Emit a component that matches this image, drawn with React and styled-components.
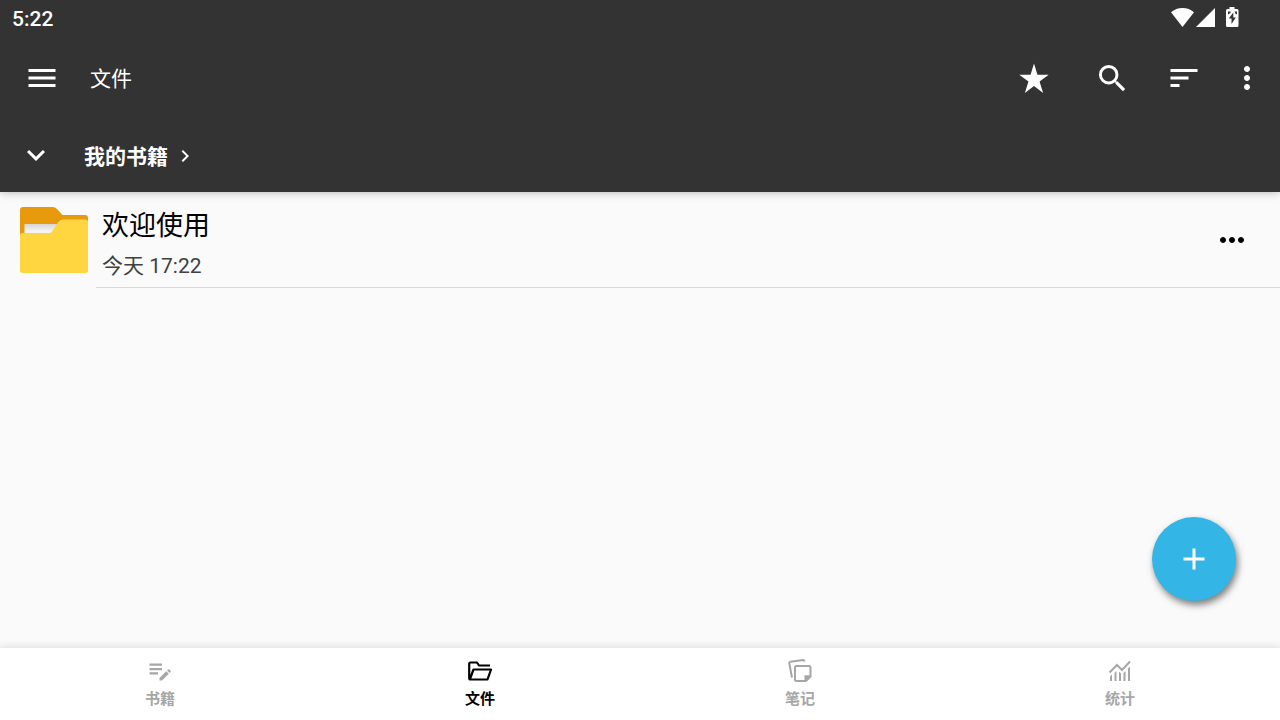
import React, { useState } from "react";
import styled, { createGlobalStyle } from "styled-components";

const GlobalStyle = createGlobalStyle`
  * {
    box-sizing: border-box;
  }
  body {
    margin: 0;
    background: #fafafa;
    font-family: Roboto, "Noto Sans CJK SC", sans-serif;
  }
  button {
    border: none;
    padding: 0;
    background: none;
    color: inherit;
    font: inherit;
    cursor: pointer;
  }
  svg {
    display: block;
    fill: currentColor;
  }
`;

const Layout = styled.div`
  display: flex;
  flex-direction: column;
  min-height: 100vh;
`;

const Header = styled.header`
  background: #333333;
  color: #ffffff;
  box-shadow: 0 1px 8px rgba(0, 0, 0, 0.25);
`;

const StatusBar = styled.div`
  display: flex;
  align-items: flex-start;
  height: 36px;
  padding: 0 41px 0 12px;
`;

const Clock = styled.span`
  flex: 1;
  font-size: 21px;
  font-weight: 500;
  line-height: 38px;
`;

const StatusIcons = styled.div`
  padding-top: 7px;
`;

const Toolbar = styled.div`
  display: flex;
  align-items: center;
  height: 84px;
  padding: 0 6px;
`;

const IconButton = styled.button`
  display: flex;
  align-items: center;
  justify-content: center;
  width: ${(props) => props.$width || 72}px;
  height: 72px;
`;

const Title = styled.h1`
  flex: 1;
  margin: 0;
  padding: 2px 0 0 12px;
  font-size: 21px;
  font-weight: 400;
  line-height: 32px;
`;

const PathBar = styled.nav`
  display: flex;
  align-items: center;
  height: 72px;
`;

const PathLink = styled.a`
  display: flex;
  align-items: center;
  gap: 5px;
  padding-left: 12px;
  color: #ffffff;
  font-size: 21px;
  font-weight: 700;
  line-height: 32px;
  text-decoration: none;
`;

const PathName = styled.span`
  padding-top: 2px;
`;

const FileList = styled.ul`
  flex: 1;
  margin: 0;
  padding: 0;
  list-style: none;
`;

const FileRow = styled.li`
  display: flex;
  height: 96px;
  padding-left: 20px;
`;

const FolderBox = styled.div`
  width: 76px;
  padding-top: 14px;
`;

const FileBody = styled.div`
  flex: 1;
  display: flex;
  align-items: center;
  padding: 0 12px 0 6px;
  border-bottom: 1px solid #d9d9d9;
`;

const FileInfo = styled.div`
  flex: 1;
  padding-top: 12px;
`;

const FileName = styled.div`
  color: #000000;
  font-size: 27px;
  line-height: 40px;
`;

const FileDate = styled.div`
  color: #404040;
  font-size: 21px;
  line-height: 40px;
`;

const AddButton = styled.button`
  position: fixed;
  right: 44px;
  bottom: 119px;
  display: flex;
  align-items: center;
  justify-content: center;
  width: 84px;
  height: 84px;
  && {
    background: #33b5e5;
    color: #ffffff;
  }
  border-radius: 50%;
  box-shadow: 2px 4px 7px rgba(0, 0, 0, 0.5);
`;

const BottomBar = styled.nav`
  position: sticky;
  bottom: 0;
  display: flex;
  height: 72px;
  background: #ffffff;
  box-shadow: 0 -1px 8px rgba(0, 0, 0, 0.12);
`;

const Tab = styled.button`
  flex: 1;
  display: flex;
  flex-direction: column;
  align-items: center;
  gap: 4px;
  padding-top: 11px;
  && {
    color: ${(props) => (props.$active ? "#000000" : "#a6a6a6")};
  }
`;

const TabLabel = styled.span`
  font-size: 15px;
  font-weight: 700;
  line-height: 24px;
`;

function Icon({ d, size = 36 }) {
  return (
    <svg width={size} height={size} viewBox="0 0 24 24" aria-hidden="true">
      <path d={d} />
    </svg>
  );
}

const paths = {
  menu: "M3 18h18v-2H3v2zm0-5h18v-2H3v2zm0-7v2h18V6H3z",
  star: "M12 2.3l2.3 7.5h7.5l-6.1 4.5 2.4 7.7-6.1-4.7L5.9 22l2.4-7.7-6.1-4.5h7.5z",
  search:
    "M15.800 14.300h-.79l-.28-.27A6.471 6.471 0 0 0 16.300 9.800 6.500 6.500 0 1 0 9.800 16.300c1.61 0 3.090-.59 4.230-1.570l.27.28v.79l5 4.990L20.790 19.300l-4.990-5zm-6 0C7.310 14.300 5.300 12.290 5.300 9.800S7.310 5.300 9.800 5.300 14.300 7.310 14.300 9.800 12.290 14.300 9.800 14.300z",
  sort: "M3 18h6v-2H3v2zM3 6v2h18V6H3zm0 7h12v-2H3v2z",
  more: "M12 8c1.1 0 2-.9 2-2s-.9-2-2-2-2 .9-2 2 .9 2 2 2zm0 2c-1.1 0-2 .9-2 2s.9 2 2 2 2-.9 2-2-.9-2-2-2zm0 6c-1.1 0-2 .9-2 2s.9 2 2 2 2-.9 2-2-.9-2-2-2z",
  moreHoriz:
    "M6 10c-1.1 0-2 .9-2 2s.9 2 2 2 2-.9 2-2-.9-2-2-2zm12 0c-1.1 0-2 .9-2 2s.9 2 2 2 2-.9 2-2-.9-2-2-2zm-6 0c-1.1 0-2 .9-2 2s.9 2 2 2 2-.9 2-2-.9-2-2-2z",
  expand: "M16.59 8L12 12.58 7.41 8 6 9.410l6 6 6-6z",
  next: "M10 6L8.59 7.41 13.17 12l-4.58 4.59L10 18l6-6z",
  add: "M19 13h-6v6h-2v-6H5v-2h6V5h2v6h6v2z",
};

function SystemIcons() {
  return (
    <StatusIcons>
      <svg width="68" height="20" viewBox="0 0 68 20" aria-hidden="true">
        <path d="M0 5.2C3.2 2.5 7.2 1 11.5 1S19.8 2.5 23 5.2L11.5 20z" />
        <path d="M44 1v19H25z" />
        <path
          fillRule="evenodd"
          d="M58.5 0h5v2H66q1.500 0 1.500 1.500v15Q67.500 20 66 20h-9.500Q55 20 55 18.500v-15Q55 2 56.500 2h2zM62.300 5.500l-4.500 6h2.700v5.500l4.300-6.500h-2.500z"
        />
        <path fill="#333333" d="M57 4.500h2.500v1.500L57 7.500zM63.500 4.500H66V7l-1 .5z" />
      </svg>
    </StatusIcons>
  );
}

function FolderIcon() {
  return (
    <svg width="68" height="68" viewBox="0 0 68 68" aria-hidden="true">
      <defs>
        <linearGradient id="paper" x1="0" y1="0" x2="0" y2="1">
          <stop offset="0" stopColor="#d6d6d6" />
          <stop offset="0.6" stopColor="#f4f4f4" />
        </linearGradient>
      </defs>
      <path
        fill="#e69a0c"
        d="M3 1H33q2 0 3.500 1.500L42.500 9H65q3 0 3 3v28H0V4Q0 1 3 1z"
      />
      <path fill="url(#paper)" d="M4.500 18h36v12h-36z" />
      <path
        fill="#ffd63f"
        d="M2 27h27q2 0 3-1.500L38 16.500Q40 13.500 43 13.500h22q3 0 3 2.500v48.500q0 2.500-2.500 2.500h-63Q0 67 0 64.500V29q0-2 2-2z"
      />
    </svg>
  );
}

const tabs = [
  {
    label: "书籍",
    icon: (
      <>
        <path d="M1.500 4.500h12.500v2.200H1.500zM1.500 9h12.500v2.200H1.500zM1.500 13.300h8.500v2.200H1.500z" />
        <path d="M11.500 19l6.800-6.800 2.500 2.500-6.800 6.800h-2.500zM19.100 11.400l.9-.9q.6-.6 1.200 0l1.300 1.300q.6.600 0 1.200l-.9.900z" />
      </>
    ),
  },
  {
    label: "文件",
    icon: (
      <g fill="none" stroke="currentColor" strokeWidth="2.2" strokeLinejoin="round">
        <path d="M22 6.500H11L9 3.500H2.500Q1.200 3.500 1.200 5v14q0 1.500 1.500 1.500h16.800L23 10.500H5.500L2 20" />
      </g>
    ),
  },
  {
    label: "笔记",
    icon: (
      <>
        <g fill="none" stroke="currentColor" strokeWidth="2">
          <path d="M4 18.500L1.300 4.500Q1 3 2.500 2.700L15 1.100q1.200-.1 1.500 1.400" />
          <path d="M8.500 7H21q1.500 0 1.500 1.500v9L18 22H8.500Q7 22 7 20.500v-12Q7 7 8.500 7z" />
        </g>
        <path d="M16.500 22.500v-6.200H23z" />
      </>
    ),
  },
  {
    label: "统计",
    icon: (
      <>
        <path
          fill="none"
          stroke="currentColor"
          strokeWidth="2"
          d="M1.500 13.500L9 6l5 5 8-8.500"
        />
        <path d="M2 17.500l2-2V22H2zM6.500 14l2-2v10h-2zM11 12.500l2 2V22h-2zM15.500 14l2-2v10h-2zM20 9.500l2-2V22h-2z" />
      </>
    ),
  },
];

const files = [{ name: "欢迎使用", date: "今天 17:22" }];

function App() {
  const [active, setActive] = useState("文件");

  return (
    <>
      <GlobalStyle />
      <Layout>
        <Header>
          <StatusBar>
            <Clock>5:22</Clock>
            <SystemIcons />
          </StatusBar>
          <Toolbar>
            <IconButton aria-label="菜单">
              <Icon d={paths.menu} />
            </IconButton>
            <Title>文件</Title>
            <IconButton $width={84} aria-label="收藏">
              <Icon d={paths.star} />
            </IconButton>
            <IconButton aria-label="搜索">
              <Icon d={paths.search} />
            </IconButton>
            <IconButton aria-label="排序">
              <Icon d={paths.sort} />
            </IconButton>
            <IconButton $width={54} aria-label="更多">
              <Icon d={paths.more} />
            </IconButton>
          </Toolbar>
          <PathBar>
            <IconButton aria-label="展开">
              <Icon d={paths.expand} />
            </IconButton>
            <PathLink href="#books">
              <PathName>我的书籍</PathName>
              <Icon d={paths.next} size={24} />
            </PathLink>
          </PathBar>
        </Header>

        <FileList>
          {files.map((file) => (
            <FileRow key={file.name}>
              <FolderBox>
                <FolderIcon />
              </FolderBox>
              <FileBody>
                <FileInfo>
                  <FileName>{file.name}</FileName>
                  <FileDate>{file.date}</FileDate>
                </FileInfo>
                <IconButton aria-label="文件选项">
                  <Icon d={paths.moreHoriz} />
                </IconButton>
              </FileBody>
            </FileRow>
          ))}
        </FileList>

        <AddButton aria-label="添加">
          <Icon d={paths.add} />
        </AddButton>

        <BottomBar>
          {tabs.map((tab) => (
            <Tab
              key={tab.label}
              $active={tab.label === active}
              onClick={() => setActive(tab.label)}
            >
              <svg width="24" height="24" viewBox="0 0 24 24" aria-hidden="true">
                {tab.icon}
              </svg>
              <TabLabel>{tab.label}</TabLabel>
            </Tab>
          ))}
        </BottomBar>
      </Layout>
    </>
  );
}

export default App;
